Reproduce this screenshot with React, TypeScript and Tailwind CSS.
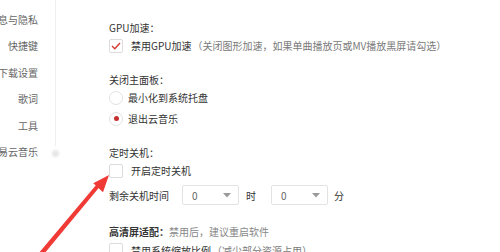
import React from "react";

const font = { fontFamily: '"Noto Sans CJK SC", "Noto Sans", sans-serif' };

function Checkbox({ checked }: { checked?: boolean }) {
  return (
    <div className="w-[14px] h-[14px] border border-[#dcdcdc] rounded-[2px] bg-white flex items-center justify-center shrink-0">
      {checked && (
        <svg width="10" height="8" viewBox="0 0 10 8">
          <polyline points="1,4 3.8,6.8 9,1" fill="none" stroke="#d33a31" strokeWidth="1.4" />
        </svg>
      )}
    </div>
  );
}

function Radio({ checked }: { checked?: boolean }) {
  return (
    <div className="w-[14px] h-[14px] rounded-full border border-[#e2e2e2] bg-white flex items-center justify-center shrink-0">
      {checked && <div className="w-[5px] h-[5px] rounded-full bg-[#c62f2f]" />}
    </div>
  );
}

function Select() {
  return (
    <div className="w-[57px] h-[20px] border border-[#e3e3e3] rounded-[2px] flex items-center justify-between pl-[9px] pr-[7px] text-[#666]">
      <span>0</span>
      <svg width="8" height="5" viewBox="0 0 8 5">
        <polygon points="0,0 8,0 4,4.5" fill="#9a9a9a" />
      </svg>
    </div>
  );
}

export default function App() {
  const side = ["消息与隐私", "快捷键", "下载设置", "歌词", "工具", "关于网易云音乐"];
  return (
    <div className="relative w-[500px] h-[252px] overflow-hidden bg-white flex text-[10px] text-[#333]" style={font}>
      <div className="w-[38px] shrink-0 pt-[6px] flex flex-col text-[#666]">
        {side.map((s) => (
          <div key={s} className="h-[26.5px] shrink-0 flex items-center justify-end overflow-hidden whitespace-nowrap">
            {s}
          </div>
        ))}
      </div>
      <div className="w-[18px] shrink-0 flex justify-end">
        <div className="relative w-[1px] h-[146px] bg-[#f0f0f0]">
          <div className="absolute left-[-3px] top-[150px] w-[7px] h-[7px] rounded-full bg-[#e6e6e6] blur-[1px]" />
        </div>
      </div>
      <div className="ml-[53px] pt-[18.5px] flex flex-col">
        <div className="h-[18px] shrink-0 flex items-center">GPU加速：</div>
        <div className="h-[18px] shrink-0 flex items-center">
          <Checkbox checked />
          <span className="ml-[8px]">禁用GPU加速</span>
          <span className="ml-[1px] text-[#7a7a7a] whitespace-nowrap">（关闭图形加速，如果单曲播放页或MV播放黑屏请勾选）</span>
        </div>
        <div className="h-[18px] shrink-0 mt-[16px] flex items-center">关闭主面板：</div>
        <div className="h-[18px] shrink-0 flex items-center">
          <Radio />
          <span className="ml-[5px]">最小化到系统托盘</span>
        </div>
        <div className="h-[18px] shrink-0 mt-[3px] flex items-center">
          <Radio checked />
          <span className="ml-[5px]">退出云音乐</span>
        </div>
        <div className="h-[18px] shrink-0 mt-[16px] flex items-center">定时关机：</div>
        <div className="h-[18px] shrink-0 flex items-center">
          <Checkbox />
          <span className="ml-[8px]">开启定时关机</span>
        </div>
        <div className="h-[20px] shrink-0 mt-[5.5px] flex items-center">
          <span className="w-[73px]">剩余关机时间</span>
          <Select />
          <span className="ml-[7px] w-[25px]">时</span>
          <Select />
          <span className="ml-[6px]">分</span>
        </div>
        <div className="h-[18px] shrink-0 mt-[17px] flex items-center whitespace-nowrap">
          <span className="font-bold">高清屏适配：</span>
          <span className="text-[#888]">禁用后，建议重启软件</span>
        </div>
        <div className="h-[18px] shrink-0 mt-[1px] flex items-center whitespace-nowrap">
          <Checkbox />
          <span className="ml-[8px]">禁用系统缩放比例</span>
          <span className="ml-[1px] text-[#7a7a7a]">（减少部分资源占用）</span>
        </div>
      </div>
      <svg className="absolute left-0 top-0 pointer-events-none" width="500" height="252" viewBox="0 0 500 252">
        <polygon points="38,254 44,254 99.5,187 96.5,184.5" fill="#ef3a36" />
        <polygon points="109,175 93.3,183.3 103,192.2" fill="#ef3a36" />
      </svg>
    </div>
  );
}
